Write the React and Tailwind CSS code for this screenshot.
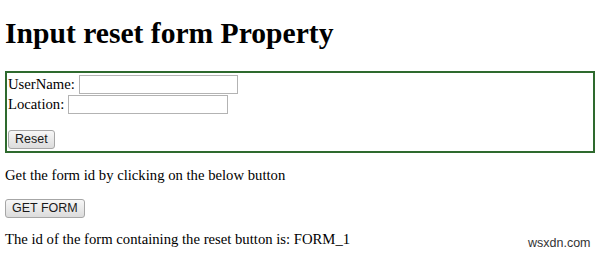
export default function App() {
  const serif = { fontFamily: '"Liberation Serif", "Times New Roman", serif' };
  const sans = { fontFamily: '"Liberation Sans", Arial, sans-serif' };
  return (
    <div className="w-[600px] h-[253px] bg-white text-black px-[5px] overflow-hidden" style={serif}>
      <h1 className="mt-[15px] text-[29.6px] leading-[36px] font-bold">Input reset form Property</h1>
      <form className="mt-[20px] border-2 border-[#2e6a2e] pt-[1px] pb-[2px] pl-[1px] text-[14.7px]">
        <div className="h-[20px] flex items-center leading-[20px]">
          <span>UserName:</span>
          <input type="text" className="ml-[4px] h-[19px] w-[159px] border border-[#b3b3b3] bg-white outline-none" />
        </div>
        <div className="h-[20px] flex items-center leading-[20px]">
          <span>Location:</span>
          <input type="text" className="ml-[4px] h-[19px] w-[160px] border border-[#b3b3b3] bg-white outline-none" />
        </div>
        <div className="h-[16px]" />
        <button type="reset" className="block h-[19px] px-[6px] border border-[#a6a6a6] rounded-[3px] bg-gradient-to-b from-[#f7f7f7] to-[#dcdcdc] text-[12.5px] leading-[17px] text-[#1a1a1a]" style={sans}>Reset</button>
      </form>
      <p className="mt-[12px] text-[14.7px] leading-[20px]">Get the form id by clicking on the below button</p>
      <button type="button" className="mt-[14px] block h-[19px] px-[6px] border border-[#a6a6a6] rounded-[3px] bg-gradient-to-b from-[#f7f7f7] to-[#dcdcdc] text-[12.5px] leading-[17px] text-[#1a1a1a]" style={sans}>GET FORM</button>
      <p className="mt-[11px] text-[14.7px] leading-[20px]">The id of the form containing the reset button is: FORM_1</p>
      <div className="absolute left-[528px] top-[236px] text-[12.5px] leading-[14px] text-[#333]" style={sans}>wsxdn.com</div>
    </div>
  );
}
